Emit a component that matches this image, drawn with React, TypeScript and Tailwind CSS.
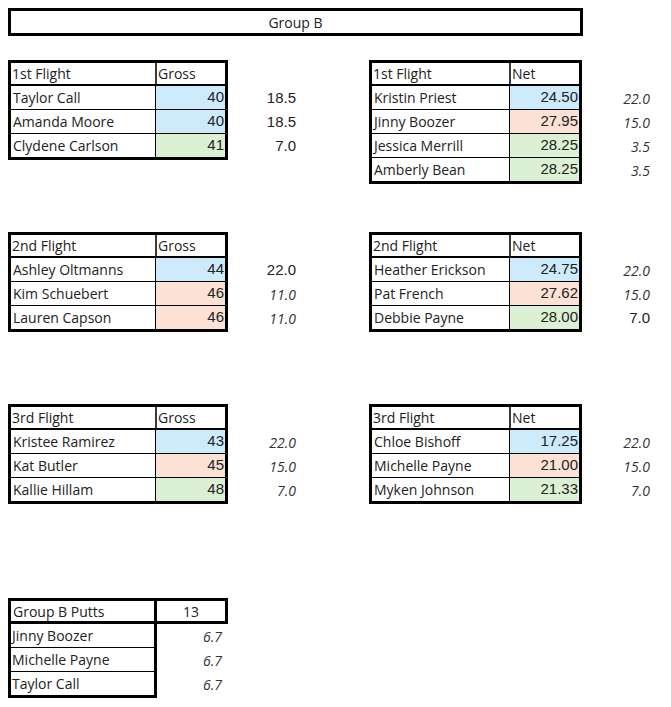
import React from "react";

type Row = { name: string; value: string; color: string };
type Side = { text: string; hw: boolean };

const HW = "font-['Open_Sans',sans-serif]";
const AR = "font-['Liberation_Sans',Arial,sans-serif]";

const BLUE = "bg-[#cdebfb]";
const PEACH = "bg-[#fce1d5]";
const GREEN = "bg-[#dcf0d3]";

function FlightTable({
  title,
  col,
  rows,
  side,
  nameW,
}: {
  title: string;
  col: string;
  rows: Row[];
  side: Side[];
  nameW: string;
}) {
  return (
    <div className="flex items-start">
      <div className="border-[3px] border-black flex flex-col">
        <div className="flex h-[23px] border-b-2 border-black">
          <div className={`${nameW} flex items-center pl-[1px] text-[14px] text-[#222] ${HW}`}>{title}</div>
          <div className={`w-[70px] flex items-center border-l-2 border-[#3a3a3a] pl-[1px] text-[14px] text-[#222] ${HW}`}>
            {col}
          </div>
        </div>
        {rows.map((r, i) => (
          <div
            key={i}
            className={`flex ${i < rows.length - 1 ? "h-[24px] border-b border-black" : "h-[23px]"}`}
          >
            <div className={`${nameW} flex items-center pl-[2px] text-[14px] text-[#222] ${HW}`}>{r.name}</div>
            <div
              className={`w-[70px] flex items-center justify-end border-l border-black pr-[1px] text-[15px] text-[#222] ${AR} ${r.color}`}
            >
              {r.value}
            </div>
          </div>
        ))}
      </div>
      <div className="w-[68px] pt-[26px] flex flex-col">
        {side.map((s, i) => (
          <div
            key={i}
            className={`h-[24px] flex items-center justify-end ${
              s.hw ? `${HW} italic text-[14px] text-[#333]` : `${AR} text-[15px] text-[#222]`
            }`}
          >
            {s.text}
          </div>
        ))}
      </div>
    </div>
  );
}

const ar = (t: string): Side => ({ text: t, hw: false });
const hw = (t: string): Side => ({ text: t, hw: true });

function Section({
  label,
  left,
  leftSide,
  right,
  rightSide,
}: {
  label: string;
  left: Row[];
  leftSide: Side[];
  right: Row[];
  rightSide: Side[];
}) {
  return (
    <div className="h-[172px] flex items-start gap-[73px]">
      <FlightTable title={label} col="Gross" rows={left} side={leftSide} nameW="w-[144px]" />
      <FlightTable title={label} col="Net" rows={right} side={rightSide} nameW="w-[137px]" />
    </div>
  );
}

export default function App() {
  return (
    <div className="w-[671px] h-[707px] bg-white pl-[8px] pt-[8px] overflow-hidden">
      <div className={`w-[575px] h-[28px] border-[3px] border-black flex items-center justify-center text-[14px] text-[#222] ${HW}`}>
        Group B
      </div>
      <div className="mt-[24px] flex flex-col">
        <Section
          label="1st Flight"
          left={[
            { name: "Taylor Call", value: "40", color: BLUE },
            { name: "Amanda Moore", value: "40", color: BLUE },
            { name: "Clydene Carlson", value: "41", color: GREEN },
          ]}
          leftSide={[ar("18.5"), ar("18.5"), ar("7.0")]}
          right={[
            { name: "Kristin Priest", value: "24.50", color: BLUE },
            { name: "Jinny Boozer", value: "27.95", color: PEACH },
            { name: "Jessica Merrill", value: "28.25", color: GREEN },
            { name: "Amberly Bean", value: "28.25", color: GREEN },
          ]}
          rightSide={[hw("22.0"), hw("15.0"), hw("3.5"), hw("3.5")]}
        />
        <Section
          label="2nd Flight"
          left={[
            { name: "Ashley Oltmanns", value: "44", color: BLUE },
            { name: "Kim Schuebert", value: "46", color: PEACH },
            { name: "Lauren Capson", value: "46", color: PEACH },
          ]}
          leftSide={[ar("22.0"), hw("11.0"), hw("11.0")]}
          right={[
            { name: "Heather Erickson", value: "24.75", color: BLUE },
            { name: "Pat French", value: "27.62", color: PEACH },
            { name: "Debbie Payne", value: "28.00", color: GREEN },
          ]}
          rightSide={[hw("22.0"), hw("15.0"), ar("7.0")]}
        />
        <Section
          label="3rd Flight"
          left={[
            { name: "Kristee Ramirez", value: "43", color: BLUE },
            { name: "Kat Butler", value: "45", color: PEACH },
            { name: "Kallie Hillam", value: "48", color: GREEN },
          ]}
          leftSide={[hw("22.0"), hw("15.0"), hw("7.0")]}
          right={[
            { name: "Chloe Bishoff", value: "17.25", color: BLUE },
            { name: "Michelle Payne", value: "21.00", color: PEACH },
            { name: "Myken Johnson", value: "21.33", color: GREEN },
          ]}
          rightSide={[hw("22.0"), hw("15.0"), hw("7.0")]}
        />
      </div>
      <div className="mt-[22px] flex flex-col w-[220px]">
        <div className="flex h-[26px] border-[3px] border-black">
          <div className={`w-[143px] flex items-center pl-[2px] text-[14px] text-[#222] ${HW}`}>Group B Putts</div>
          <div className={`flex-1 flex items-center justify-center border-l-[3px] border-black text-[14px] text-[#222] ${HW}`}>
            13
          </div>
        </div>
        <div className="flex">
          <div className="w-[149px] border-l-[3px] border-r-[3px] border-b-[3px] border-black flex flex-col">
            {["Jinny Boozer", "Michelle Payne", "Taylor Call"].map((n, i) => (
              <div
                key={n}
                className={`flex items-center pl-[1px] text-[14px] text-[#222] ${HW} ${
                  i < 2 ? "h-[24px] border-b border-black" : "h-[23px]"
                }`}
              >
                {n}
              </div>
            ))}
          </div>
          <div className="flex-1 flex flex-col">
            {["6.7", "6.7", "6.7"].map((v, i) => (
              <div key={i} className={`h-[24px] flex items-center justify-end pr-[6px] italic text-[14px] text-[#333] ${HW}`}>
                {v}
              </div>
            ))}
          </div>
        </div>
      </div>
    </div>
  );
}
